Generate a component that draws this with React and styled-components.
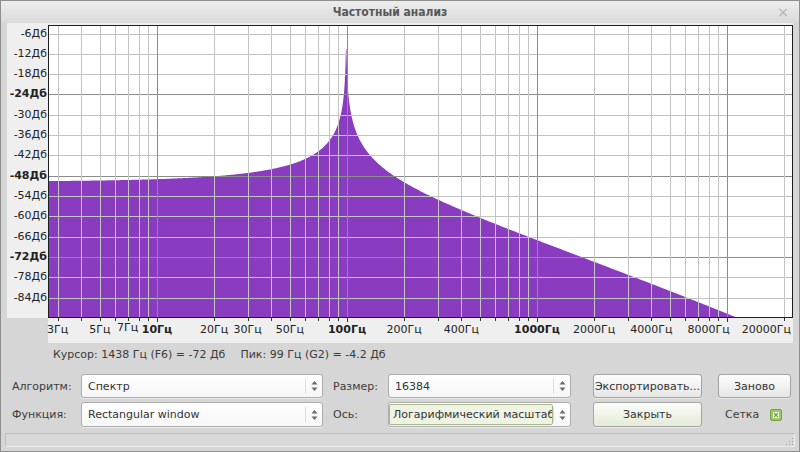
import React from "react";
import styled, { createGlobalStyle } from "styled-components";

const GlobalStyle = createGlobalStyle`
  html, body {
    margin: 0;
    padding: 0;
    background: #d6d6d6;
  }
  body {
    font-family: "DejaVu Sans", "Liberation Sans", sans-serif;
    font-size: 11px;
    color: #3c3c3c;
  }
`;

// log frequency / dB scales of the plot
const FMIN = 2.669;
const FMAX = 22050;
const PX_PER_DEC = 190;
const PLOT_W = 745;
const PLOT_H = 293;
const xOf = (f) => (Math.log10(f) - Math.log10(FMIN)) * PX_PER_DEC;
const yOf = (db) => 8.5 + (-6 - db) * (20.33 / 6);

const spectrumPoints = () => {
  const pts = [`0,${PLOT_H}`];
  for (let px = 0; px <= 744; px += px > 285 && px < 312 ? 0.25 : 1) {
    const f = FMIN * Math.pow(10, px / PX_PER_DEC);
    const d = Math.max(Math.abs(f - 99), 0.2);
    const L = Math.log10(d / 96);
    let y = 181 + 56 * L + (L > 0 ? 4.9 * L * L : 0);
    y = Math.min(Math.max(y, 49), 318) - 25;
    pts.push(`${px.toFixed(2)},${y.toFixed(2)}`);
  }
  pts.push(`${PLOT_W},${PLOT_H}`);
  return pts.join(" ");
};

const vLines = [];
for (let e = 0; e <= 4; e++) {
  for (let m = 1; m <= 9; m++) {
    const f = m * Math.pow(10, e);
    if (f < FMIN || f > FMAX) continue;
    vLines.push({ x: Math.round(xOf(f)) + 0.5, major: m === 1 && e >= 1 });
  }
}

const dbValues = [-6, -12, -18, -24, -30, -36, -42, -48, -54, -60, -66, -72, -78, -84];
const majorDb = [-24, -48, -72];

const freqLabels = [
  { f: 3, t: "3Гц" },
  { f: 5, t: "5Гц" },
  { f: 7, t: "7Гц", raised: true },
  { f: 10, t: "10Гц", bold: true },
  { f: 20, t: "20Гц" },
  { f: 30, t: "30Гц" },
  { f: 50, t: "50Гц" },
  { f: 100, t: "100Гц", bold: true },
  { f: 200, t: "200Гц" },
  { f: 400, t: "400Гц" },
  { f: 1000, t: "1000Гц", bold: true },
  { f: 2000, t: "2000Гц" },
  { f: 4000, t: "4000Гц" },
  { f: 8000, t: "8000Гц" },
  { f: 20000, t: "20000Гц", edge: true },
];

const Spinner = () => (
  <SpinBox>
    <svg width="7" height="12" viewBox="0 0 7 12">
      <path d="M3.5 1 L6.5 4.5 L0.5 4.5 Z" fill="#6a6a6a" />
      <path d="M3.5 11 L6.5 7.5 L0.5 7.5 Z" fill="#6a6a6a" />
    </svg>
  </SpinBox>
);

const Combo = ({ children, focused }) => (
  <ComboBox>
    <ComboText focused={focused}>{children}</ComboText>
    <Spinner />
  </ComboBox>
);

const App = () => {
  const points = spectrumPoints();
  return (
    <>
      <GlobalStyle />
      <Window>
        <TitleBar>
          <Title>Частотный анализ</Title>
          <Close>×</Close>
        </TitleBar>
        <Body>
          <ChartGrid>
            <YAxis>
              {dbValues.map((db) => (
                <YLabel
                  key={db}
                  bold={majorDb.includes(db)}
                  style={{ top: yOf(db) + 2 - 7 }}
                >
                  {db}Дб
                </YLabel>
              ))}
            </YAxis>
            <Plot>
              <svg width={PLOT_W} height={PLOT_H}>
                <rect x="0" y="0" width={PLOT_W} height={PLOT_H} fill="#fff" />
                <polygon points={points} fill="#8a3cc1" />
                {dbValues.map((db) => {
                  const y = Math.round(yOf(db)) + 0.5;
                  return (
                    <line
                      key={db}
                      x1="0"
                      x2={PLOT_W}
                      y1={y}
                      y2={y}
                      stroke={majorDb.includes(db) ? "#8c8c8c" : "#c4c4c4"}
                      strokeWidth="1"
                    />
                  );
                })}
                {vLines.map((l, i) => (
                  <line
                    key={i}
                    x1={l.x}
                    x2={l.x}
                    y1="0"
                    y2={PLOT_H}
                    stroke={l.major ? "#8c8c8c" : "#c4c4c4"}
                    strokeWidth="1"
                  />
                ))}
                <rect
                  x="0.5"
                  y="0.5"
                  width={PLOT_W - 1}
                  height={PLOT_H - 1}
                  fill="none"
                  stroke="#1e1e1e"
                />
              </svg>
            </Plot>
            <Corner />
            <XAxis>
              <svg width={PLOT_W} height="5">
                {vLines.map((l, i) => (
                  <line
                    key={i}
                    x1={l.x}
                    x2={l.x}
                    y1="0"
                    y2={l.major ? 4 : 3}
                    stroke="#333"
                  />
                ))}
              </svg>
              {freqLabels.map((l) => (
                <XLabel
                  key={l.t}
                  bold={l.bold}
                  raised={l.raised}
                  edge={l.edge}
                  style={l.edge ? undefined : { left: xOf(l.f) }}
                >
                  {l.t}
                </XLabel>
              ))}
            </XAxis>
          </ChartGrid>
          <InfoRow>
            <span>Курсор: 1438 Гц (F6) = -72 Дб</span>
            <span>Пик: 99 Гц (G2) = -4.2 Дб</span>
          </InfoRow>
          <Controls>
            <FieldLabel>Алгоритм:</FieldLabel>
            <Combo>Спектр</Combo>
            <FieldLabel indent>Размер:</FieldLabel>
            <Combo>16384</Combo>
            <Button width={109}>Экспортировать...</Button>
            <Button width={73}>Заново</Button>

            <FieldLabel>Функция:</FieldLabel>
            <Combo>Rectangular window</Combo>
            <FieldLabel indent>Ось:</FieldLabel>
            <Combo focused>Логарифмический масштаб</Combo>
            <Button width={109} primary>
              Закрыть
            </Button>
            <GridToggle>
              <span>Сетка</span>
              <svg width="12" height="12" viewBox="0 0 12 12">
                <rect x="0.5" y="0.5" width="11" height="11" rx="1.5" fill="#9cc86a" stroke="#76a340" />
                <rect x="3" y="3" width="6" height="6" fill="#e4f1d4" />
                <path d="M4.2 4.2 L7.8 7.8 M7.8 4.2 L4.2 7.8" stroke="#6f9c3c" strokeWidth="1.2" />
              </svg>
            </GridToggle>
          </Controls>
          <StatusBar>
            <svg width="10" height="10" viewBox="0 0 10 10">
              {[
                [8, 2], [8, 5], [5, 5], [8, 8], [5, 8], [2, 8],
              ].map(([x, y]) => (
                <rect key={`${x}-${y}`} x={x} y={y} width="1" height="1" fill="#9e9e9e" />
              ))}
            </svg>
          </StatusBar>
        </Body>
      </Window>
    </>
  );
};

export default App;

const Window = styled.div`
  box-sizing: border-box;
  width: 800px;
  height: 452px;
  border: 1px solid #8e8e8e;
  background: #d6d6d6;
  display: flex;
  flex-direction: column;
  overflow: hidden;
`;

const TitleBar = styled.div`
  position: relative;
  height: 22px;
  flex: none;
  display: flex;
  align-items: center;
  justify-content: center;
  background: linear-gradient(#ededed, #dadada);
`;

const Title = styled.div`
  font-family: "DejaVu Sans Condensed", "DejaVu Sans", sans-serif;
  font-weight: bold;
  font-size: 12px;
  color: #585858;
  margin-left: -20px;
`;

const Close = styled.div`
  position: absolute;
  right: 10px;
  top: 3px;
  font-size: 14px;
  color: #b0b0b0;
`;

const Body = styled.div`
  flex: 1;
  display: flex;
  flex-direction: column;
  padding: 0 6px;
`;

const ChartGrid = styled.div`
  display: grid;
  grid-template-columns: 41px ${PLOT_W}px;
  grid-template-rows: 295px 25px;
`;

const YAxis = styled.div`
  position: relative;
  background: #efefef;
`;

const YLabel = styled.span`
  position: absolute;
  right: 1px;
  line-height: 14px;
  font-size: 11px;
  color: #222;
  font-weight: ${({ bold }) => (bold ? "bold" : "normal")};
  white-space: nowrap;
`;

const Plot = styled.div`
  padding-top: 2px;
  background: #efefef;

  svg {
    display: block;
  }
`;

const Corner = styled.div``;

const XAxis = styled.div`
  position: relative;
  background: #efefef;

  svg {
    display: block;
  }
`;

const XLabel = styled.span`
  position: absolute;
  top: ${({ raised }) => (raised ? "3px" : "5px")};
  ${({ edge }) => (edge ? "right: 2px;" : "transform: translateX(-50%);")}
  line-height: 13px;
  font-size: 11px;
  color: #222;
  font-weight: ${({ bold }) => (bold ? "bold" : "normal")};
  white-space: nowrap;
`;

const InfoRow = styled.div`
  height: 22px;
  display: flex;
  align-items: center;
  gap: 15px;
  padding-left: 46px;
  font-size: 11px;
  color: #3a3a3a;
`;

const Controls = styled.div`
  display: grid;
  grid-template-columns: 69px 242px 65px 183px 131px 89px;
  grid-template-rows: 24px 25px;
  row-gap: 4px;
  margin: 9px 0 0 5px;
  align-items: center;
`;

const FieldLabel = styled.span`
  padding-left: ${({ indent }) => (indent ? "10px" : "0")};
  color: #3c3c3c;
`;

const ComboBox = styled.div`
  box-sizing: border-box;
  height: 100%;
  display: flex;
  align-items: stretch;
  border: 1px solid #adadad;
  border-radius: 3px;
  background: linear-gradient(#ffffff, #f6f6f6);
  box-shadow: 0 1px 0 rgba(255, 255, 255, 0.5);
`;

const ComboText = styled.div`
  flex: 1;
  display: flex;
  align-items: center;
  padding-left: ${({ focused }) => (focused ? "3px" : "6px")};
  color: #333;
  white-space: nowrap;
  overflow: hidden;
  ${({ focused }) =>
    focused &&
    `
    margin: 1px 0 1px 0;
    border: 1px solid #a7b98c;
    border-radius: 2px;
    background: #eef3e4;
  `}
`;

const SpinBox = styled.div`
  width: 16px;
  display: flex;
  align-items: center;
  justify-content: center;
  margin: 4px 0;
  border-left: 1px solid #dcdcdc;
`;

const Button = styled.button`
  justify-self: end;
  box-sizing: border-box;
  width: ${({ width }) => width}px;
  height: 100%;
  padding: 0;
  font-family: "DejaVu Sans", "Liberation Sans", sans-serif;
  font-size: 11px;
  color: #333;
  border: 1px solid #a3a3a3;
  border-radius: 3px;
  background: ${({ primary }) =>
    primary
      ? "linear-gradient(#fbfdf8, #e4ead9)"
      : "linear-gradient(#fdfdfd, #e6e6e6)"};
  box-shadow: 0 1px 0 rgba(255, 255, 255, 0.5);
`;

const GridToggle = styled.div`
  display: flex;
  align-items: center;
  gap: 11px;
  padding-left: 23px;
  color: #3c3c3c;

  svg {
    display: block;
  }
`;

const StatusBar = styled.div`
  margin: 6px -2px 0;
  height: 14px;
  box-sizing: border-box;
  border: 1px solid #bcbcbc;
  border-bottom-color: #ececec;
  border-right-color: #ececec;
  background: #d9d9d9;
  display: flex;
  justify-content: flex-end;
  align-items: flex-end;

  svg {
    display: block;
  }
`;
